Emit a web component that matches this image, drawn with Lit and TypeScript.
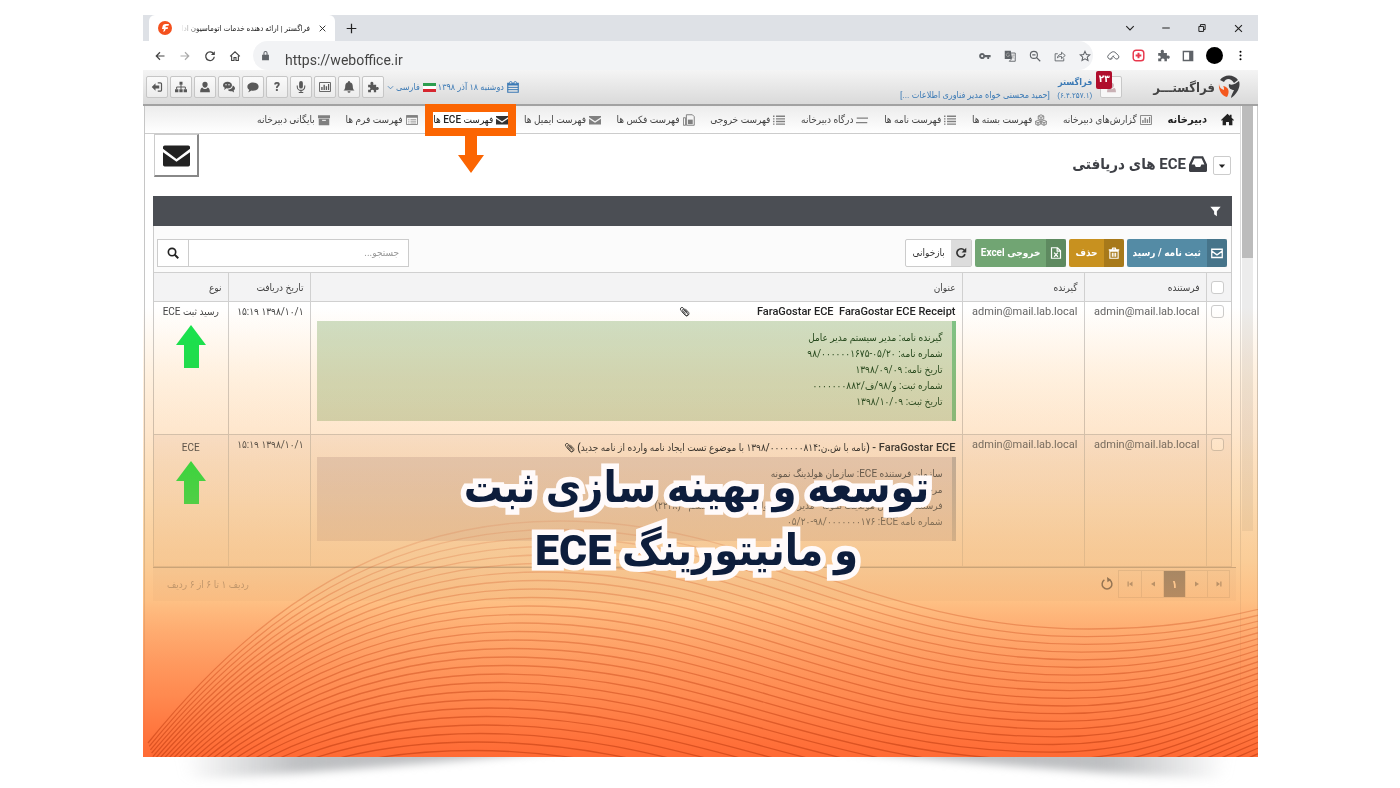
import { LitElement, html, svg, css } from "lit";
import { customElement } from "lit/decorators.js";

const ICONS: Record<string, unknown> = {
  back: svg`<path d="M14 8H3M8 3L3 8l5 5" fill="none" stroke="currentColor" stroke-width="1.6"/>`,
  forward: svg`<path d="M2 8h11M8 3l5 5-5 5" fill="none" stroke="currentColor" stroke-width="1.6"/>`,
  reload: svg`<path d="M12.8 5.2A5.7 5.7 0 1 0 13.7 9" fill="none" stroke="currentColor" stroke-width="1.7"/><path d="M14.4 1.6v5.2H9.2z" fill="currentColor"/>`,
  homeLine: svg`<path d="M1.5 8.5L8 2.3l6.5 6.2M3.5 7.5V14h3.2v-4h2.6v4h3.2V7.5" fill="none" stroke="currentColor" stroke-width="1.5"/>`,
  lock: svg`<path d="M3 7h10v8H3zM5 7V4.5a3 3 0 0 1 6 0V7H9.5V4.5a1.5 1.5 0 0 0-3 0V7z" fill="currentColor"/>`,
  close: svg`<path d="M3 3l10 10M13 3L3 13" stroke="currentColor" stroke-width="1.6"/>`,
  plus: svg`<path d="M8 1v14M1 8h14" stroke="currentColor" stroke-width="1.8"/>`,
  chevron: svg`<path d="M2 5l6 6 6-6" fill="none" stroke="currentColor" stroke-width="1.8"/>`,
  minus: svg`<path d="M2 8h12" stroke="currentColor" stroke-width="1.6"/>`,
  restore: svg`<path d="M3 5.5h7.500v8H3zM5.500 5.500v-3H13v8h-2.500" fill="none" stroke="currentColor" stroke-width="1.6"/>`,
  key: svg`<path fill="currentColor" fill-rule="evenodd" d="M4.200 4a4 4 0 1 0 3.700 5.500H11V12h2.500V9.500H15.500v-3H7.900A4 4 0 0 0 4.200 4zm0 2.500a1.500 1.500 0 1 1 0 3 1.500 1.500 0 0 1 0-3z"/>`,
  translate: svg`<path d="M1 1h8l2 11H1z" fill="currentColor"/><path d="M9.500 4H15v11H7l3-3" fill="none" stroke="currentColor" stroke-width="1.200"/><path d="M7.300 5.200A2.300 2.300 0 1 0 7.500 7H5.500M10.500 7h4M12.500 6v1c0 2-1 3.500-2.500 4.500M11 8c.5 1.500 1.500 3 3 3.500" fill="none" stroke="#aaa" stroke-width="1"/>`,
  zoomOut: svg`<circle cx="6.500" cy="6.500" r="4.700" fill="none" stroke="currentColor" stroke-width="1.500"/><path d="M10 10l5 5M4.300 6.500h4.400" stroke="currentColor" stroke-width="1.500"/>`,
  share: svg`<path d="M5 5H1.500v9.500H13V11M4.500 10.500C5 7 7.500 5.800 10 5.800V3l5 4.300-5 4.200V8.600C7.500 8.600 6 9 4.500 10.500z" fill="none" stroke="currentColor" stroke-width="1.200"/>`,
  star: svg`<path d="M8 1.800l1.900 4.200 4.500.5-3.400 3 1 4.500L8 11.700 4 14l1-4.500-3.400-3 4.500-.5z" fill="none" stroke="currentColor" stroke-width="1.400"/>`,
  cloud: svg`<path d="M2 12a3.500 3.500 0 0 1 0-5l3-2.500a4 4 0 0 1 6 .5l3 3a2.700 2.700 0 0 1-3.500 4L7 8.500M4 12.500L8.500 8M2.500 12a2.500 2.500 0 0 0 3.500 0l1-1" fill="none" stroke="currentColor" stroke-width="1.200"/>`,
  extPlus: svg`<rect x="1.500" y="1.500" width="13" height="13" rx="3.500" fill="none" stroke="#e8384d" stroke-width="1.800"/><path d="M8 4.500v7M4.500 8h7" stroke="#e8384d" stroke-width="2.400"/>`,
  puzzle: svg`<path d="M1.500 5H5C3.800 2.500 5 1 6.500 1S9.200 2.500 8.200 5h4v3.500c2.300-1 3.500.2 3.500 1.500s-1.200 2.600-3.500 1.500V15H9c.9-2.300-.2-3.300-1.800-3.300S4.500 12.700 5.500 15h-4v-3.500c2 .8 3-.2 3-1.500S3.500 7.700 1.500 8.500z" fill="currentColor"/>`,
  panel: svg`<path d="M1.800 2h12.400v12H1.800z" fill="none" stroke="currentColor" stroke-width="1.800"/><path d="M9.500 2H14v12H9.500z" fill="currentColor"/>`,
  dots: svg`<circle cx="8" cy="2.500" r="1.500"/><circle cx="8" cy="8" r="1.500"/><circle cx="8" cy="13.500" r="1.500"/>`,
  exit: svg`<path d="M1 8l5-5v3h5v4H6v3z" fill="currentColor"/><path d="M9 2.500h3.500A1.500 1.500 0 0 1 14 4v8a1.500 1.500 0 0 1-1.500 1.500H9" fill="none" stroke="currentColor" stroke-width="1.600"/>`,
  sitemap: svg`<path d="M6 1h4v4H6zM0 11h4.500v4H0zM5.800 11h4.400v4H5.800zM11.500 11H16v4h-4.500z" fill="currentColor"/><path d="M8 5v6M2.200 11V8h11.600v3" fill="none" stroke="currentColor" stroke-width="1.300"/>`,
  user: svg`<path d="M8 1a3.500 3.700 0 0 1 3.500 3.700C11.500 7 10 9 8 9S4.500 7 4.500 4.700A3.500 3.700 0 0 1 8 1zM4.500 8.500C5.500 10 6.700 10.500 8 10.500s2.500-.5 3.500-2c2 .5 3 2.500 3 6.500h-13c0-4 1-6 3-6.500z" fill="currentColor"/>`,
  comments: svg`<path d="M6 1c3.300 0 6 2 6 4.500S9.300 10 6 10l-1.500-.2L1.500 12l.8-3C.9 8.200 0 7 0 5.500 0 3 2.700 1 6 1z" fill="currentColor"/><path d="M13 6c1.800.8 3 2 3 3.800 0 1.200-.7 2.200-1.800 3l.6 2.400-2.600-1.600c-2.700.4-4.700-.6-5.700-2.100 3.800 0 6.500-2.200 6.500-5.500z" fill="currentColor"/><circle cx="4" cy="5" r="1" fill="#eee"/><circle cx="8" cy="5" r="1" fill="#eee"/>`,
  comment: svg`<path d="M8 2c4 0 7.500 2.300 7.500 5.500S12 13 8 13c-.8 0-1.500 0-2.200-.2C4.600 14 3 14.800 1.500 15c.9-1 1.400-2 1.500-3.300C1.400 10.700.5 9.200.5 7.500.5 4.300 4 2 8 2z" fill="currentColor"/>`,
  mic: svg`<rect x="5.500" y="0" width="5" height="10" rx="2.500" fill="currentColor"/><path d="M3 6v1.500a5 5 0 0 0 10 0V6M8 12.500V15M5 15.200h6" fill="none" stroke="currentColor" stroke-width="1.400"/>`,
  chart: svg`<path d="M.7 2h14.600v12H.7z" fill="none" stroke="currentColor" stroke-width="1.200"/><path d="M3 8h1.800v4H3zM6 5h1.800v7H6zM9 7h1.800v5H9zM12 4h1.500v8H12z" fill="currentColor"/>`,
  bell: svg`<path d="M8 0a1.200 1.200 0 0 1 1.200 1.500C11.700 2 13 4 13 6.500c0 3.500 1 5 2.500 6.200H.5C2 11.500 3 10 3 6.500 3 4 4.300 2 6.800 1.500A1.200 1.200 0 0 1 8 0zM6 13.500h4a2 2 0 0 1-4 0z" fill="currentColor"/>`,
  calendar: svg`<path d="M1 3h14v12H1z" fill="none" stroke="currentColor" stroke-width="1.500"/><path d="M1 3h14v3H1z" fill="currentColor"/><path d="M1 8.500h14M1 11.500h14" stroke="currentColor" stroke-width="1.300"/><circle cx="5" cy="2.300" r="1.600" fill="#eee" stroke="currentColor" stroke-width="1.200"/><circle cx="11" cy="2.300" r="1.600" fill="#eee" stroke="currentColor" stroke-width="1.200"/>`,
  home: svg`<path d="M8 1l2.800 2.700V2h2.200v3.800L16 8.500l-1 1-1-.8V15H9.800v-4H6.200v4H2V8.700l-1 .8-1-1z" fill="currentColor"/>`,
  boxes: svg`<path d="M8 1l3.700 1.700v4L8 8.400 4.300 6.700v-4zM4 8.200l3.600 1.700v3.600L4 15.200.4 13.500V9.900zM12 8.200l3.600 1.700v3.600L12 15.200l-3.600-1.700V9.900zM4.300 2.700L8 4.500l3.700-1.800M8 4.500v4M.4 9.900L4 11.700l3.600-1.800M4 11.700v3.500M8.400 9.900l3.600 1.800 3.600-1.800M12 11.700v3.500" fill="#ddd" stroke="currentColor" stroke-width="1.100"/>`,
  list: svg`<path d="M0 3h2M4 3h12M0 6.500h2M4 6.500h12M0 10h2M4 10h12M0 13.500h2M4 13.500h12" stroke="currentColor" stroke-width="1.700"/>`,
  swap: svg`<path d="M1 5.500h15M0 11.500h15" stroke="currentColor" stroke-width="1.900"/>`,
  fax: svg`<path d="M.5 5h3v10h-3zM4.500 15V1h8l2.500 2.500V15z" fill="none" stroke="currentColor" stroke-width="1.300"/><path d="M6.500 7.500h6.500v6H6.500z" fill="currentColor"/>`,
  mail: svg`<path d="M0 2.500h16v1.700L8 9.700 0 4.200zM0 6.200l8 5.300 8-5.300V14H0z" fill="currentColor"/>`,
  form: svg`<path d="M.6 2h14.800v12H.6z" fill="none" stroke="currentColor" stroke-width="1.200"/><path d="M.6 2h14.800v3H.6z" fill="currentColor"/><path d="M3 7.500h1.500M6 7.500h7.500M3 9.700h1.500M6 9.700h7.500M3 12h1.500M6 12h7.500" stroke="currentColor" stroke-width=".9"/>`,
  archive: svg`<path d="M0 1.500h16v4H0zM1 6.200h14V15H1z" fill="currentColor"/><path d="M5.500 8.500h5" stroke="#eee" stroke-width="1.500"/>`,
  bigMail: svg`<path d="M1 2h14a1 1 0 0 1 1 1v1L8 10 0 4V3a1 1 0 0 1 1-1zM0 6l8 5.700L16 6v7.500a1 1 0 0 1-1 1H1a1 1 0 0 1-1-1z" fill="currentColor"/>`,
  inbox: svg`<path fill-rule="evenodd" d="M3.500 1h9L16 8.500V14a1 1 0 0 1-1 1H1a1 1 0 0 1-1-1V8.500zM4.800 3L2.300 8.500H5l1 2.200h4l1-2.200h2.700L11.200 3z" fill="currentColor"/>`,
  caret: svg`<path d="M3 5.500h10L8 11z" fill="currentColor"/>`,
  funnel: svg`<path d="M.5 1h15L10 7.500V15l-4-3V7.500z" fill="currentColor"/>`,
  mailLine: svg`<path d="M1 3h14v11H1zM1 5.500l7 5 7-5" fill="none" stroke="currentColor" stroke-width="1.700"/>`,
  trash: svg`<path d="M2.500 5.500h11V15h-11zM1 3.800h14M5.500 3.500l.7-2h3.600l.7 2M5.800 7.500v5.500M8 7.500v5.500M10.200 7.500v5.500" fill="none" stroke="currentColor" stroke-width="1.500"/>`,
  excel: svg`<path d="M2 1h8l4 4v10H2zM9.500 1v4.500H14M5.500 7.500l5 5.500M10.500 7.500l-5 5.500" fill="none" stroke="currentColor" stroke-width="1.600"/>`,
  refresh: svg`<path d="M12.500 4.500A5.500 5.500 0 1 0 13.300 9.500" fill="none" stroke="currentColor" stroke-width="2.200"/><path d="M15 1v6.200H8.800z" fill="currentColor"/>`,
  search: svg`<circle cx="6.700" cy="6.700" r="4.900" fill="none" stroke="currentColor" stroke-width="2.200"/><path d="M10.300 10.300l4.700 4.700" stroke="currentColor" stroke-width="2.600"/>`,
  clip: svg`<path d="M12.500 9.500L6 2.800a2.300 2.300 0 0 0-3.300 3.300l7.200 7.400a1.700 1.700 0 0 0 2.500-2.400L6.500 5a.9.900 0 0 0-1.300 1.200l4.600 4.800M4 8l5 5.500a3.300 3.300 0 0 0 5-4.200L9 4" fill="none" stroke="currentColor" stroke-width="1.200"/>`,
  spin: svg`<path d="M5 3.300A5.600 5.600 0 1 0 11 3.300" fill="none" stroke="currentColor" stroke-width="1.700"/><path d="M8 0l4.500 3L8.500 6z" fill="currentColor"/>`,
  first: svg`<path d="M3 3h2.500v10H3zM13 3v10L6 8z" fill="currentColor"/>`,
  prev: svg`<path d="M12 3v10L4 8z" fill="currentColor"/>`,
  next: svg`<path d="M4 3v10l8-5z" fill="currentColor"/>`,
  last: svg`<path d="M10.500 3H13v10h-2.500zM3 3v10l7-5z" fill="currentColor"/>`,
};

const icon = (name: string, size = 12) =>
  html`<svg class="icon" width=${size} height=${size} viewBox="0 0 16 16" aria-hidden="true">${ICONS[name]}</svg>`;

const NAV = [
  { label: "گزارش‌های دبیرخانه", icon: "chart" },
  { label: "فهرست بسته ها", icon: "boxes" },
  { label: "فهرست نامه ها", icon: "list" },
  { label: "درگاه دبیرخانه", icon: "swap" },
  { label: "فهرست خروجی", icon: "list" },
  { label: "فهرست فکس ها", icon: "fax" },
  { label: "فهرست ایمیل ها", icon: "mail" },
  { label: "فهرست ECE ها", icon: "mail", marked: true },
  { label: "فهرست فرم ها", icon: "form" },
  { label: "بایگانی دبیرخانه", icon: "archive" },
];

const QUICK = [
  ["exit", "خروج"],
  ["sitemap", "ساختار"],
  ["user", "کاربر"],
  ["comments", "گفتگوها"],
  ["comment", "پیام"],
  ["", "راهنما"],
  ["mic", "صدا"],
  ["chart", "گزارش"],
  ["bell", "اعلان"],
  ["puzzle", "افزونه"],
];

const WAVES = Array.from({ length: 34 }, (_, i) => {
  const px = 417 - 3.2 * i;
  const py = 506 + 8.5 * i;
  const tx = 946 - 2.4 * i;
  const ty = 614 + 7.7 * i;
  const sx = 5 + i * 1.2;
  const sy = 728 + i * 3.4;
  const run = px - sx;
  const rise = sy - py;
  const d = `M${sx} ${sy}C${sx + run * 0.27} ${sy - rise * 0.62} ${px - run * 0.42} ${py} ${px} ${py}C${px + 200} ${py} ${tx - 220} ${ty} ${tx} ${ty}C${tx + 80} ${ty} ${tx + 130} ${ty - 10 - i * 0.6} 1125 ${592 + 5.7 * i}`;
  return svg`<path d=${d} />`;
});

@customElement("app-root")
export class AppRoot extends LitElement {
  static styles = css`
    :host {
      display: block;
      font-family: Roboto, "DejaVu Sans Condensed", "DejaVu Sans", sans-serif;
      font-size: 10px;
      color: #444;
    }
    * { box-sizing: border-box; }
    button, input { font: inherit; color: inherit; margin: 0; padding: 0; }
    button { cursor: pointer; border: 0; background: none; display: inline-flex; align-items: center; justify-content: center; }
    a { color: inherit; text-decoration: none; }
    .icon { display: block; flex: none; }
    .stage { min-height: 100vh; display: flex; flex-direction: column; padding: 15px 142px 0 143px; background: #fff; }
    .frame { position: relative; isolation: isolate; flex: 1; display: flex; flex-direction: column; background: #fff; overflow: hidden; }
    .shadow { display: block; width: 100%; height: 31px; flex: none; }

    .tabs { display: flex; height: 26px; background: #dee1e6; padding: 0 14px 0 6px; align-items: center; color: #222; }
    .tab { align-self: stretch; display: flex; align-items: center; gap: 8px; width: 186px; padding: 0 8px 0 9px; background: #fff; border-radius: 6px 6px 0 0; }
    .tab-title { flex: 1; white-space: nowrap; direction: rtl; font-size: 8px; mask-image: linear-gradient(to right, transparent, #000 20px); }
    .new-tab { margin-left: 11px; }
    .win { margin-left: auto; display: flex; gap: 26px; }
    .bar { display: flex; align-items: center; height: 29px; color: #5f6368; }
    .bar-nav { display: flex; gap: 13px; padding: 0 12px 0 11px; color: #444; }
    .dim { color: #aaa; }
    .omni { flex: 1; align-self: stretch; display: flex; align-items: center; gap: 13px; padding: 0 2px 0 7px; background: #f2f3f5; border-radius: 15px; }
    .url { flex: 1; border: 0; background: none; outline: 0; font-size: 14px; color: #444; padding: 9px 0 0 1px; }
    .ext { display: flex; align-items: center; gap: 12px; padding: 0 12px 0 14px; }
    .avatar { width: 17px; height: 17px; border-radius: 50%; background: #000; }

    .app { direction: rtl; flex: 1; display: flex; flex-direction: column; }
    .head { display: flex; align-items: center; height: 36px; padding: 0 18px 0 3px; background: linear-gradient(#f4f4f4, #dadada); border-bottom: 2px solid #a2a2a2; color: #3c7ab5; }
    .logo { display: flex; align-items: center; gap: 3px; color: #444; font-size: 13px; font-weight: 700; }
    .alert { position: relative; width: 22px; height: 22px; margin: 0 31px 0 4px; border: 1px solid #c8c8c8; border-radius: 2px; background: #f7f7f7; color: #c9b1b5; }
    .badge { position: absolute; right: 9px; top: -6px; width: 16px; height: 18px; border-radius: 2px; background: #b00d2c; color: #fff; font-size: 10px; font-weight: 700; line-height: 16px; text-align: center; }
    .who { display: flex; flex-direction: column; line-height: 13px; font-size: 9px; margin-right: 4px; padding-top: 3px; }
    .who small { font-size: 8px; margin-left: 5px; }
    .date { margin-right: auto; display: flex; align-items: center; gap: 3px; font-size: 9px; }
    .lang { gap: 2px; margin: 0 2px 0 3px; font-size: 9px; }
    .flag { display: block; margin-left: 1px; }
    .quick { direction: ltr; display: flex; gap: 2px; }
    .quick button { width: 22px; height: 22px; border: 1px solid #c6c6c6; border-radius: 2px; background: linear-gradient(#fafafa, #ececec); color: #585858; font-size: 12px; font-weight: 900; }

    .body { flex: 1; display: flex; margin-left: 1px; }
    .rail { width: 17px; padding: 0 4px 0 1px; border-right: 1px solid #ccc; }
    .track { height: 425px; background: #ececec; }
    .thumb { height: 152px; background: #bcbcbc; }
    .main { flex: 1; min-width: 0; display: flex; flex-direction: column; border-left: 1px solid #c6c6c6; border-right: 1px solid #ddd; }
    .nav { display: flex; align-items: center; justify-content: space-between; height: 28px; padding: 0 6px 0 112px; background: linear-gradient(#ececec, #fff); border-bottom: 1px solid #ccc; white-space: nowrap; }
    .nav a { display: flex; align-items: center; gap: 3px; }
    .nav .icon { color: #808080; }
    .nav .home { gap: 14px; font-size: 11px; font-weight: 700; color: #222; }
    .nav .home .icon { color: #222; }
    .nav .marked { position: relative; height: 32px; margin: -2px -8px; border: 8px solid #fb6502; background: #fff; color: #222; font-weight: 500; }
    .nav .marked .icon { color: #333; }
    .pointer { position: absolute; left: 50%; top: 22px; margin-left: -13px; }
    .nav .marked .pointer { color: #fb6502; }

    .title { display: flex; align-items: flex-start; height: 62px; padding: 0 9px; }
    .title h1 { display: flex; align-items: center; gap: 3px; margin: 18px 0 0; font-size: 15px; line-height: 24px; font-weight: 700; color: #3d3f45; }
    .menu { width: 18px; height: 19px; margin: 22px 0 0 6px; border: 1px solid #ccc; border-radius: 2px; color: #222; }
    .compose { width: 45px; height: 43px; margin-right: auto; border: solid; border-color: #ccc #888 #888 #ccc; border-width: 1px 2px 2px 1px; background: #fff; color: #222; }
    .panel { margin: 0 8px; border: 1px solid #ccc; border-top: 0; }
    .filter { height: 30px; display: flex; align-items: center; padding: 0 11px; margin: 0 -1px; background: #4b4e54; color: #fff; }
    .tools { display: flex; gap: 3px; align-items: center; height: 46px; padding: 7px 4px 0 3px; background: #fbfbfb; white-space: nowrap; }
    .btn { height: 28px; border-radius: 2px; color: #fff; font-weight: 700; }
    .btn .ic { display: flex; align-items: center; justify-content: center; align-self: stretch; width: 20px; background: rgba(0, 0, 0, .16); }
    .btn .tx { padding: 0 6px; }
    .blue { background: #548ba5; }
    .gold { background: #c8911f; }
    .green { background: #71a573; }
    .plain { border: 1px solid #ccc; background: #fff; color: #333; font-weight: 400; }
    .plain .ic { background: #dcdcdc; }
    .search { margin-right: auto; display: flex; width: 252px; height: 28px; border: 1px solid #ccc; background: #fff; }
    .search input { flex: 1; min-width: 0; border: 0; outline: 0; padding: 0 9px; background: none; }
    .search input::placeholder { color: #999; }
    .search button { width: 31px; border-right: 1px solid #ccc; color: #222; }

    table { width: 100%; border-collapse: collapse; table-layout: fixed; }
    th { height: 29px; background: #f3f3f4; font-weight: 400; }
    th, td { border: 1px solid #d0d0d0; padding: 0 6px; text-align: right; vertical-align: top; white-space: nowrap; }
    th { vertical-align: middle; }
    tr > :first-child { border-right: 0; padding: 0 7px 0 5px; }
    tr > :last-child { border-left: 0; }
    td { height: 133px; padding-top: 1px; line-height: 17px; }
    tbody tr:last-child td { border-bottom: 0; }
    .alt td { height: 131px; background: #f8f3f1; }
    .c-check { width: 25px; }
    .c-mail { width: 122px; }
    .c-date { width: 82px; }
    .c-kind { width: 74px; }
    .mail { font-size: 11px; color: #666; direction: ltr; }
    .kind { text-align: center; }
    .check { appearance: none; display: block; width: 13px; height: 13px; margin: 0; border: 1px solid #ccc; border-radius: 3px; background: #fff; }
    td .check { margin-top: 3px; }
    .subject { display: flex; align-items: center; gap: 2px; color: #222; font-size: 11px; font-weight: 500; }
    .subject.far { gap: 67px; }
    .subject .fa { font-size: 10px; }
    .note { margin-top: 1px; height: 100px; padding: 9px; border-right: 4px solid #7fc487; background: #cfe0c6; color: #1f4518; line-height: 16px; }
    .note.grey { height: 84px; border-color: #b9b7bb; background: #e0d6d8; color: #444; }
    .alt .subject { padding-top: 3px; }
    .alt .kind { padding-top: 4px; }
    .up { display: block; margin: 5px auto 0; }
    .ltr { direction: ltr; unicode-bidi: isolate; }
    .pager { display: flex; align-items: center; height: 34px; margin: 0 4px 0 8px; padding: 0 6px 0 14px; background: #f4f2f2; border-top: 1px solid #999; color: #777; white-space: nowrap; }
    .pages { direction: ltr; display: flex; border: 1px solid #ccc; }
    .pages button { width: 22px; height: 26px; border-left: 1px solid #ccc; color: #666; }
    .pages button:first-child { border-left: 0; }
    .pages .on { background: #4b4e54; color: #fff; font-weight: 700; font-size: 11px; }
    .spin { margin-right: 4px; color: #111; }
    .count { margin-right: auto; }

    .tint, .wash { position: absolute; inset: 0; pointer-events: none; }
    .tint { mix-blend-mode: multiply; background: linear-gradient(#fff 292px, #fff1e0 360px, #fee6cc 419px, #fcdab0 485px, #facd98 545px, #fec084 586px, #ff8a50 680px, #ff6a34 100%); }
    .wash { background: linear-gradient(rgba(255, 255, 255, 0) 292px, rgba(254, 230, 204, .1) 419px, rgba(252, 218, 176, .25) 485px, rgba(250, 205, 152, .5) 545px, rgba(254, 192, 132, .6) 586px, rgba(255, 138, 80, .85) 680px, #ff6a34 100%); }
    .waves { display: block; width: 100%; height: 100%; fill: none; stroke-width: 1.3; }
    .caption { position: absolute; left: 0; right: 8px; top: 441px; margin: 0; direction: rtl; text-align: center; font-size: 43px; line-height: 63px; font-weight: 900; color: #0d1d3c; -webkit-text-stroke: 11px #fffafa; paint-order: stroke fill; stroke-linejoin: round; pointer-events: none; }
    .caption span { display: block; }
  `;

  private arrow(fill: string) {
    return html`<svg class="up" width="30" height="43" viewBox="0 0 30 43" aria-hidden="true"><path d="M15 0l15 20h-7v23H8V20H0z" fill=${fill} /></svg>`;
  }

  private chrome() {
    return html`
      <div class="tabs">
        <div class="tab">
          <svg class="icon" width="14" height="14" viewBox="0 0 16 16" aria-hidden="true"><circle cx="8" cy="8" r="8" fill="#f4511e" /><path d="M12.500 3.500H8.500Q5.500 3.500 5 7l-.5 2h2.300L6 12.500Q8.500 12 8.800 9H11l.5-2H8.500Q8.600 5.500 10 5.500h2z" fill="#fff" /></svg>
          <span class="tab-title">فراگستر | ارائه دهنده خدمات اتوماسیون ادا</span>
          <button aria-label="بستن زبانه">${icon("close", 9)}</button>
        </div>
        <button class="new-tab" aria-label="زبانه جدید">${icon("plus", 11)}</button>
        <div class="win">
          <button aria-label="زبانه‌ها">${icon("chevron", 10)}</button>
          <button aria-label="کوچک">${icon("minus", 10)}</button>
          <button aria-label="بازگردانی">${icon("restore", 10)}</button>
          <button aria-label="بستن">${icon("close", 11)}</button>
        </div>
      </div>
      <div class="bar">
        <div class="bar-nav">
          <button aria-label="قبلی">${icon("back")}</button>
          <button class="dim" aria-label="بعدی">${icon("forward")}</button>
          <button aria-label="بارگذاری">${icon("reload")}</button>
          <button aria-label="خانه">${icon("homeLine")}</button>
        </div>
        <div class="omni">
          ${icon("lock", 11)}
          <input class="url" aria-label="نشانی" value="https://weboffice.ir" />
          ${icon("key")}${icon("translate")}${icon("zoomOut", 12)}${icon("share", 12)}${icon("star")}
        </div>
        <div class="ext">
          ${icon("cloud", 13)}${icon("extPlus", 13)}${icon("puzzle", 13)}${icon("panel", 12)}
          <span class="avatar"></span>
          ${icon("dots", 11)}
        </div>
      </div>`;
  }

  private head() {
    return html`
      <header class="head">
        <div class="logo">
          <svg class="icon" width="22" height="24" viewBox="0 0 22 24" aria-hidden="true">
            <path d="M2 5C6-1 16-1 20 5l-4 3C13 3 8 3 6 7z" fill="#3f3f41" />
            <path d="M11 9c4 2 7-1 10-3 2 6-2 13-8 17 0-3 2-5 3-8-3 0-6-2-5-6z" fill="#3f3f41" />
            <path d="M1 8c0 4 2 6 5 7 0-2 0-3-1-4 6 1 7 6 4 11C5 21 0 17 1 8z" fill="#f4581e" />
          </svg>
          <span>فراگستـــر</span>
        </div>
        <button class="alert" aria-label="اعلان‌ها">${icon("user", 11)}<span class="badge">۲۳</span></button>
        <div class="who">
          <strong>فراگستر</strong>
          <span><small>(۶.۴.۲۵۷.۱)</small> [حمید محسنی خواه مدیر فناوری اطلاعات ...]</span>
        </div>
        <div class="date">${icon("calendar")}<span>دوشنبه ۱۸ آذر ۱۳۹۸</span></div>
        <button class="lang">
          <svg class="flag" width="13" height="9" viewBox="0 0 13 9" aria-hidden="true"><path d="M0 0h13v9H0z" fill="#fff" /><path d="M0 0h13v3H0z" fill="#2e9e4f" /><path d="M0 6h13v3H0z" fill="#d6262f" /></svg>
          فارسی ${icon("chevron", 7)}
        </button>
        <div class="quick">
          ${QUICK.map(([name, label]) => html`<button aria-label=${label}>${name ? icon(name, 12) : "?"}</button>`)}
        </div>
      </header>`;
  }

  private nav() {
    return html`
      <nav class="nav">
        <a class="home" href="#">${icon("home", 13)}<span>دبیرخانه</span></a>
        ${NAV.map(
          (n) => html`<a class=${n.marked ? "marked" : "item"} href="#">
            ${icon(n.icon)}<span>${n.label}</span>
            ${n.marked
              ? html`<svg class="pointer icon" width="26" height="39" viewBox="0 0 26 39" aria-hidden="true"><path d="M7 0h12v21h7L13 39 0 21h7z" fill="currentColor" /></svg>`
              : ""}
          </a>`
        )}
      </nav>`;
  }

  private grid() {
    return html`
      <table>
        <colgroup><col class="c-check" /><col class="c-mail" /><col class="c-mail" /><col /><col class="c-date" /><col class="c-kind" /></colgroup>
        <thead>
          <tr>
            <th><input class="check" type="checkbox" aria-label="انتخاب همه" /></th>
            <th>فرستنده</th><th>گیرنده</th><th>عنوان</th><th>تاریخ دریافت</th><th>نوع</th>
          </tr>
        </thead>
        <tbody>
          <tr>
            <td><input class="check" type="checkbox" aria-label="انتخاب ردیف ۱" /></td>
            <td class="mail">admin@mail.lab.local</td>
            <td class="mail">admin@mail.lab.local</td>
            <td>
              <div class="subject far"><span class="ltr">FaraGostar ECE&nbsp; FaraGostar ECE Receipt</span>${icon("clip", 11)}</div>
              <div class="note">
                <div>گیرنده نامه: مدیر سیستم مدیر عامل</div>
                <div>شماره نامه: <span class="ltr">۹۸/۰۰۰۰۰۰۱۶۷۵-۰۵/۲۰</span></div>
                <div>تاریخ نامه: ۱۳۹۸/۰۹/۰۹</div>
                <div>شماره ثبت: و/۹۸/ف/۰۰۰۰۰۰۰۸۸۲</div>
                <div>تاریخ ثبت: ۱۳۹۸/۱۰/۰۹</div>
              </div>
            </td>
            <td>۱۳۹۸/۱۰/۱ ۱۵:۱۹</td>
            <td class="kind">رسید ثبت ECE ${this.arrow("#16e64e")}</td>
          </tr>
          <tr class="alt">
            <td><input class="check" type="checkbox" aria-label="انتخاب ردیف ۲" /></td>
            <td class="mail">admin@mail.lab.local</td>
            <td class="mail">admin@mail.lab.local</td>
            <td>
              <div class="subject"><span>FaraGostar ECE - <span class="fa">(نامه با ش.ن:۱۳۹۸/۰۰۰۰۰۰۰۸۱۴ با موضوع تست ایجاد نامه وارده از نامه جدید)</span></span>${icon("clip", 11)}</div>
              <div class="note grey">
                <div>سازمان فرستنده ECE: سازمان هولدینگ نمونه</div>
                <div>مرجع نامه ECE: <span class="ltr">۹۸/۰۰۰۰۰۰۰۱۷۶</span></div>
                <div>فرستنده: سازمان هولدینگ نمونه - مدیر عامل هولدینگ - مدیر سیستم - (۲۲۲۸)</div>
                <div>شماره نامه ECE: <span class="ltr">۰۵/۲۰-۹۸/۰۰۰۰۰۰۰۱۷۶</span></div>
              </div>
            </td>
            <td>۱۳۹۸/۱۰/۱ ۱۵:۱۹</td>
            <td class="kind">ECE ${this.arrow("#16ee30")}</td>
          </tr>
        </tbody>
      </table>`;
  }

  render() {
    return html`
      <div class="stage">
        <div class="frame">
          ${this.chrome()}
          <div class="app">
            ${this.head()}
            <div class="body">
              <div class="rail"><div class="track"><div class="thumb"></div></div></div>
              <main class="main">
                ${this.nav()}
                <div class="title">
                  <button class="menu" aria-label="گزینه‌ها">${icon("caret", 10)}</button>
                  <h1>${icon("inbox", 18)}<span>ECE های دریافتی</span></h1>
                  <button class="compose" aria-label="ایمیل">${icon("bigMail", 27)}</button>
                </div>
                <section class="panel">
                  <div class="filter">${icon("funnel", 11)}</div>
                  <div class="tools">
                    <button class="btn blue"><span class="ic">${icon("mailLine")}</span><span class="tx">ثبت نامه / رسید</span></button>
                    <button class="btn gold"><span class="ic">${icon("trash")}</span><span class="tx">حذف</span></button>
                    <button class="btn green"><span class="ic">${icon("excel")}</span><span class="tx">خروجی Excel</span></button>
                    <button class="btn plain"><span class="ic">${icon("refresh")}</span><span class="tx">بازخوانی</span></button>
                    <div class="search">
                      <input type="text" aria-label="جستجو" placeholder="جستجو..." />
                      <button aria-label="جستجو">${icon("search")}</button>
                    </div>
                  </div>
                  ${this.grid()}
                </section>
                <div class="pager">
                  <div class="pages">
                    <button aria-label="اولین">${icon("first", 8)}</button>
                    <button aria-label="قبلی">${icon("prev", 8)}</button>
                    <button class="on">۱</button>
                    <button aria-label="بعدی">${icon("next", 8)}</button>
                    <button aria-label="آخرین">${icon("last", 8)}</button>
                  </div>
                  <button class="spin" aria-label="بازخوانی">${icon("spin", 14)}</button>
                  <span class="count">ردیف ۱ تا ۶ از ۶ ردیف</span>
                </div>
              </main>
            </div>
          </div>
          <div class="tint"></div>
          <div class="wash">
            <svg class="waves" viewBox="0 0 1115 742" preserveAspectRatio="none" aria-hidden="true">
              <defs>
                <linearGradient id="ink" gradientUnits="userSpaceOnUse" x1="0" y1="500" x2="0" y2="742">
                  <stop offset="0" stop-color="#d0572a" stop-opacity=".12" />
                  <stop offset=".5" stop-color="#cf5020" stop-opacity=".4" />
                  <stop offset="1" stop-color="#c63f12" stop-opacity=".65" />
                </linearGradient>
              </defs>
              <g stroke="url(#ink)">${WAVES}</g>
            </svg>
          </div>
          <h2 class="caption"><span>توسعه و بهینه سازی ثبت</span><span>و مانیتورینگ ECE</span></h2>
        </div>
        <svg class="shadow" viewBox="0 0 1115 31" preserveAspectRatio="none" aria-hidden="true">
          <defs>
            <linearGradient id="sl"><stop offset="0" stop-color="#a9abae" stop-opacity="0" /><stop offset=".3" stop-color="#a9abae" stop-opacity=".75" /><stop offset="1" stop-color="#a9abae" stop-opacity=".8" /></linearGradient>
            <linearGradient id="sr"><stop offset="0" stop-color="#a9abae" stop-opacity=".8" /><stop offset=".7" stop-color="#a9abae" stop-opacity=".75" /><stop offset="1" stop-color="#a9abae" stop-opacity="0" /></linearGradient>
            <filter id="soft" x="-10%" y="-50%" width="120%" height="200%" color-interpolation-filters="sRGB"><feGaussianBlur stdDeviation="8 4" /></filter>
          </defs>
          <g filter="url(#soft)">
            <path d="M40-8H430Q220 14 50 22z" fill="url(#sl)" />
            <path d="M685-8H1085L1075 22Q900 14 685-8z" fill="url(#sr)" />
          </g>
        </svg>
      </div>`;
  }
}
